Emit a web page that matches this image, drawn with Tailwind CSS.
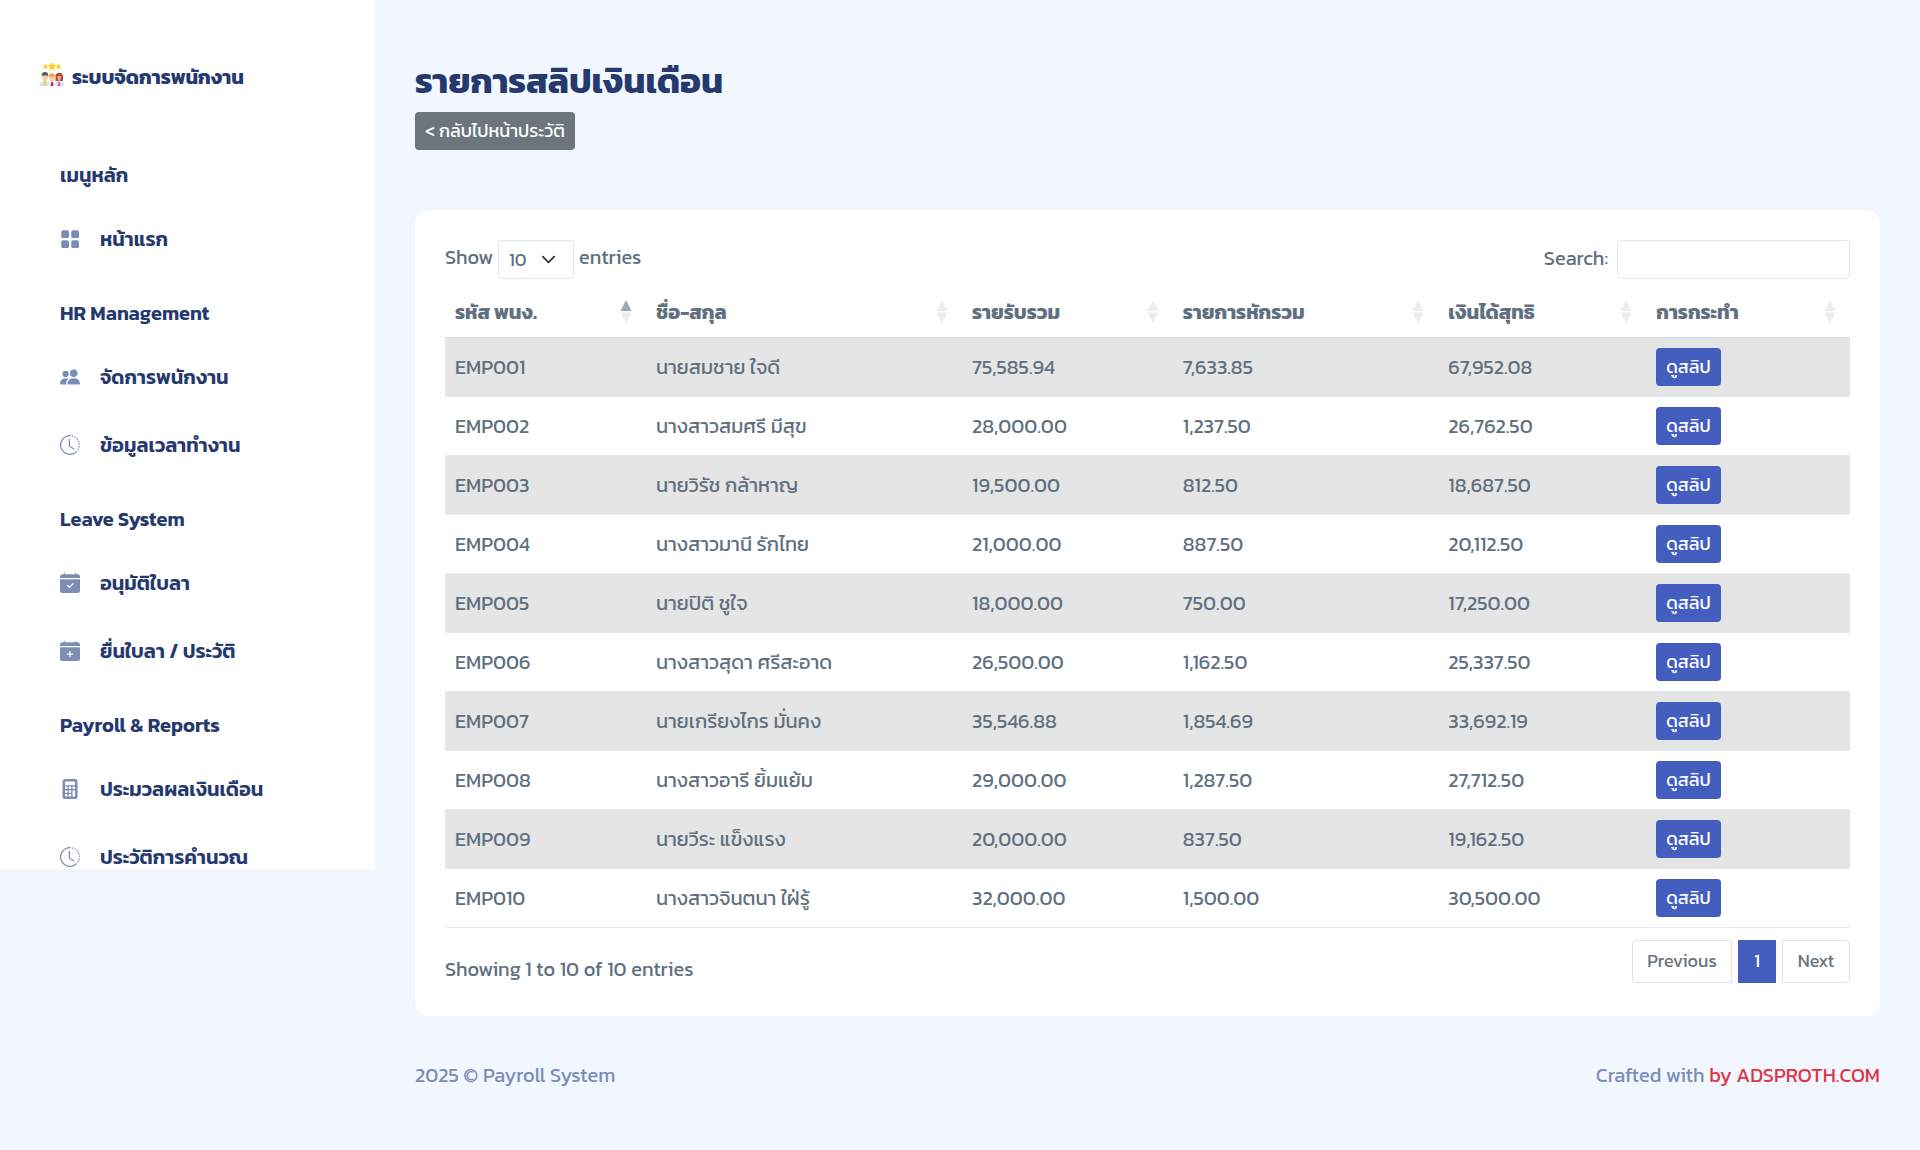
<!DOCTYPE html>
<html lang="th">
<head>
  <meta charset="UTF-8">
  <meta name="viewport" content="width=device-width, initial-scale=1.0">
  <title>รายการสลิปเงินเดือน</title>
  <script src="https://cdn.jsdelivr.net/npm/@tailwindcss/browser@4"></script>
</head>
<body class="bg-[#f2f7ff] text-[#607080] text-[20px] leading-[30px] font-['Kanit','Noto_Sans','Noto_Sans_Thai',sans-serif]">
  <!-- icon set -->
  <svg class="hidden" xmlns="http://www.w3.org/2000/svg">
    <symbol id="i-grid" viewBox="0 0 16 16"><rect x="1" y="1" width="6.2" height="6.2" rx="1.5"/><rect x="9" y="1" width="6.2" height="6.2" rx="1.5"/><rect x="1" y="9" width="6.2" height="6.2" rx="1.5"/><rect x="9" y="9" width="6.2" height="6.2" rx="1.5"/></symbol>
    <symbol id="i-people" viewBox="0 0 16 16"><path d="M7 14s-1 0-1-1 1-4 5-4 5 3 5 4-1 1-1 1zm4-6a3 3 0 1 0 0-6 3 3 0 0 0 0 6m-5.784 6A2.24 2.24 0 0 1 5 13c0-1.355.68-2.75 1.936-3.72A6.3 6.3 0 0 0 5 9c-4 0-5 3-5 4s1 1 1 1zM4.5 8a2.5 2.5 0 1 0 0-5 2.5 2.5 0 0 0 0 5"/></symbol>
    <symbol id="i-clock" viewBox="0 0 16 16"><path d="M8.515 1.019A7 7 0 0 0 8 1V0a8 8 0 0 1 .589.022zm2.004.45a7 7 0 0 0-.985-.299l.219-.976q.576.129 1.126.342zm1.37.71a7 7 0 0 0-.439-.27l.493-.87a8 8 0 0 1 .979.654l-.615.789a7 7 0 0 0-.418-.302zm1.834 1.79a7 7 0 0 0-.653-.796l.724-.69q.406.429.747.91zm.744 1.352a7 7 0 0 0-.214-.468l.893-.45a8 8 0 0 1 .45 1.088l-.95.313a7 7 0 0 0-.179-.483m.53 2.507a7 7 0 0 0-.1-1.025l.985-.17q.1.58.116 1.17zm-.131 1.538q.05-.254.081-.51l.993.123a8 8 0 0 1-.23 1.155l-.964-.267q.069-.247.12-.501m-.952 2.379q.276-.436.486-.908l.914.405q-.24.54-.555 1.038zm-.964 1.205q.183-.183.35-.378l.758.653a8 8 0 0 1-.401.432z"/><path d="M8 1a7 7 0 1 0 4.95 11.95l.707.707A8.001 8.001 0 1 1 8 0z"/><path d="M7.5 3a.5.5 0 0 1 .5.5v5.21l3.248 1.856a.5.5 0 0 1-.496.868l-3.5-2A.5.5 0 0 1 7 9V3.5a.5.5 0 0 1 .5-.5"/></symbol>
    <symbol id="i-cal-check" viewBox="0 0 16 16"><path d="M4 .5a.5.5 0 0 0-1 0V1H2a2 2 0 0 0-2 2v1h16V3a2 2 0 0 0-2-2h-1V.5a.5.5 0 0 0-1 0V1H4zM16 14V5H0v9a2 2 0 0 0 2 2h12a2 2 0 0 0 2-2m-5.146-5.146-3 3a.5.5 0 0 1-.708 0l-1.500-1.500a.5.5 0 0 1 .708-.708L7.5 10.793l2.646-2.647a.5.5 0 0 1 .708.708"/></symbol>
    <symbol id="i-cal-plus" viewBox="0 0 16 16"><path d="M4 .5a.5.5 0 0 0-1 0V1H2a2 2 0 0 0-2 2v1h16V3a2 2 0 0 0-2-2h-1V.5a.5.5 0 0 0-1 0V1H4zM16 14V5H0v9a2 2 0 0 0 2 2h12a2 2 0 0 0 2-2M8.5 8.5V10H10a.5.5 0 0 1 0 1H8.5v1.5a.5.5 0 0 1-1 0V11H6a.5.5 0 0 1 0-1h1.500V8.500a.5.5 0 0 1 1 0"/></symbol>
    <symbol id="i-calc" viewBox="0 0 16 16"><path d="M4 0h8a2 2 0 0 1 2 2v12a2 2 0 0 1-2 2H4a2 2 0 0 1-2-2V2a2 2 0 0 1 2-2"/><g fill="#fff"><rect x="4" y="2" width="8" height="3" rx=".5"/><rect x="4" y="6" width="2" height="2" rx=".5"/><rect x="7" y="6" width="2" height="2" rx=".5"/><rect x="10" y="6" width="2" height="2" rx=".5"/><rect x="4" y="9" width="2" height="2" rx=".5"/><rect x="7" y="9" width="2" height="2" rx=".5"/><rect x="4" y="12" width="2" height="2" rx=".5"/><rect x="7" y="12" width="2" height="2" rx=".5"/><rect x="10" y="9" width="2" height="5" rx=".5"/></g></symbol>
  </svg>

  <div class="flex items-start min-h-screen">
    <aside class="w-[375px] h-[869px] shrink-0 overflow-hidden bg-white text-[#25396f] font-semibold">
      <div class="h-[135px] pt-[62px] pl-10">
        <a href="#" class="flex items-start gap-2 font-bold">
          <svg class="size-6" viewBox="0 0 24 24">
            <g fill="#fdd017"><path d="M12 0l1.300 2.700 3 .4-2.200 2.100.6 3L12 6.800 9.300 8.200l.6-3-2.200-2.100 3-.4z"/><path d="M5.500 1.500l.9 1.900 2 .3-1.500 1.400.4 2-1.800-1-1.800 1 .4-2-1.500-1.400 2-.3z"/><path d="M18.500 1.500l.9 1.900 2 .3-1.500 1.400.4 2-1.800-1-1.800 1 .4-2-1.500-1.400 2-.3z"/></g>
            <path fill="#a5524a" d="M15.500 19v-5a3.800 3.800 0 0 1 7.500 0v5z"/>
            <path fill="#cfe3fb" d="M0 24v-2q0-2.500 5-3 4 .5 5 3v2zM14 24v-2q1-2.500 5-3 5 .5 5 3v2z"/>
            <path fill="#fbc9a8" d="M2.500 13h5v3.500q-.5 2.500-2.500 3-2-.5-2.500-3z"/>
            <path fill="#f3a58a" d="M17.500 14h3.400v2.500q-.3 2-1.700 2.500-1.400-.5-1.700-2.500z"/>
            <path fill="#58595f" d="M1.700 15v-3q.5-2 3.300-2t3.200 2v3l-.9-1.500H2.600z"/>
            <path fill="#f6d33c" d="M4.300 19h1.600l.4 5H3.800z"/>
            <path fill="#e4effd" d="M7.500 24v-1.500q1-2.500 4.500-3 3.500.5 4.500 3V24z"/>
            <path fill="#fcc9a2" d="M9.300 14h5.400v3q-.5 2.600-2.700 3.200-2.200-.6-2.700-3.200z"/>
            <path fill="#f0a63a" d="M8.800 16v-2.500q.8-2.300 3.200-2.300t3.200 2.300V16l-1-1.500H9.800z"/>
            <path fill="#e5194f" d="M11.200 20h1.600l.6 4h-2.800z"/><path fill="#e5405c" d="M18.500 20h1.300l.3 4h-1.900z"/>
          </svg>
          <span>ระบบจัดการพนักงาน</span>
        </a>
      </div>
      <nav class="pl-15">
        <h2 class="mt-[10px] h-15 flex items-center">เมนูหลัก</h2>
        <a href="#" class="h-17 flex items-center gap-5"><svg class="size-5 fill-[#7c8db5]"><use href="#i-grid"/></svg><span>หน้าแรก</span></a>

        <h2 class="mt-[10px] h-15 flex items-center">HR Management</h2>
        <a href="#" class="h-17 flex items-center gap-5"><svg class="size-5 fill-[#7c8db5]"><use href="#i-people"/></svg><span>จัดการพนักงาน</span></a>
        <a href="#" class="h-17 flex items-center gap-5"><svg class="size-5 fill-[#7c8db5]"><use href="#i-clock"/></svg><span>ข้อมูลเวลาทำงาน</span></a>

        <h2 class="mt-[10px] h-15 flex items-center">Leave System</h2>
        <a href="#" class="h-17 flex items-center gap-5"><svg class="size-5 fill-[#7c8db5]"><use href="#i-cal-check"/></svg><span>อนุมัติใบลา</span></a>
        <a href="#" class="h-17 flex items-center gap-5"><svg class="size-5 fill-[#7c8db5]"><use href="#i-cal-plus"/></svg><span>ยื่นใบลา / ประวัติ</span></a>

        <h2 class="mt-[10px] h-15 flex items-center">Payroll &amp; Reports</h2>
        <a href="#" class="h-17 flex items-center gap-5"><svg class="size-5 fill-[#7c8db5]"><use href="#i-calc"/></svg><span>ประมวลผลเงินเดือน</span></a>
        <a href="#" class="h-17 flex items-center gap-5"><svg class="size-5 fill-[#7c8db5]"><use href="#i-clock"/></svg><span>ประวัติการคำนวณ</span></a>
      </nav>
    </aside>

    <main class="flex-1 p-10">
      <header class="pt-5 pb-15">
        <h1 class="text-[35px] leading-[42px] mb-[10px] font-bold text-[#25396f]">รายการสลิปเงินเดือน</h1>
        <a href="#" class="inline-flex items-center h-[38px] px-[10px] rounded bg-[#6c757d] text-white text-[18px]">&lt; กลับไปหน้าประวัติ</a>
      </header>

      <section class="bg-white rounded-[14px] px-[30px] pt-[30px] pb-8">
        <div class="flex justify-between items-start mb-2">
          <div class="flex items-start gap-[5px]">
            <label for="length" class="pt-[2px]">Show</label>
            <div class="relative">
              <select id="length" class="appearance-none block w-[76px] h-[39px] pl-[10px] border border-[#dce7f1] rounded bg-white text-[18px]">
                <option>10</option>
                <option>25</option>
                <option>50</option>
                <option>100</option>
              </select>
              <svg class="absolute right-[18px] top-3 size-[15px] pointer-events-none" viewBox="0 0 16 16" fill="none" stroke="#343a40" stroke-width="2" stroke-linecap="round" stroke-linejoin="round"><path d="m2 5 6 6 6-6"/></svg>
            </div>
            <label for="length" class="pt-[2px]">entries</label>
          </div>
          <div class="flex items-start gap-[9px]">
            <label for="search" class="pt-[3px]">Search:</label>
            <input id="search" type="search" class="w-[233px] h-[39px] px-[10px] border border-[#dce7f1] rounded bg-white text-[18px]">
          </div>
        </div>

        <table class="w-full table-fixed text-left">
          <colgroup>
            <col class="w-[14.3%]">
            <col class="w-[22.5%]">
            <col class="w-[15%]">
            <col class="w-[18.9%]">
            <col class="w-[14.8%]">
            <col class="w-[14.5%]">
          </colgroup>
          <thead>
            <tr id="head" class="h-[50px] border-b border-[#dedede]"></tr>
          </thead>
          <tbody id="rows"></tbody>
        </table>

        <div class="flex justify-between items-start pt-3">
          <p class="pt-[14px]">Showing 1 to 10 of 10 entries</p>
          <div class="flex gap-[6px] text-[18px] text-[#6c757d]">
            <button class="h-[43px] w-[100px] border border-[#dee2e6] rounded-l">Previous</button>
            <button class="h-[43px] w-[38px] bg-[#435ebe] text-white">1</button>
            <button class="h-[43px] w-[68px] border border-[#dee2e6] rounded-r">Next</button>
          </div>
        </div>
      </section>

      <footer class="flex justify-between pt-11 text-[#7c8db5]">
        <p>2025 © Payroll System</p>
        <p>Crafted with <a href="#" class="text-[#dc3545]">by ADSPROTH.COM</a></p>
      </footer>
    </main>
  </div>

  <script>
    const columns = ['รหัส พนง.', 'ชื่อ-สกุล', 'รายรับรวม', 'รายการหักรวม', 'เงินได้สุทธิ', 'การกระทำ'];
    const slips = [
      ['EMP001', 'นายสมชาย ใจดี', '75,585.94', '7,633.85', '67,952.08'],
      ['EMP002', 'นางสาวสมศรี มีสุข', '28,000.00', '1,237.50', '26,762.50'],
      ['EMP003', 'นายวิรัช กล้าหาญ', '19,500.00', '812.50', '18,687.50'],
      ['EMP004', 'นางสาวมานี รักไทย', '21,000.00', '887.50', '20,112.50'],
      ['EMP005', 'นายปิติ ชูใจ', '18,000.00', '750.00', '17,250.00'],
      ['EMP006', 'นางสาวสุดา ศรีสะอาด', '26,500.00', '1,162.50', '25,337.50'],
      ['EMP007', 'นายเกรียงไกร มั่นคง', '35,546.88', '1,854.69', '33,692.19'],
      ['EMP008', 'นางสาวอารี ยิ้มแย้ม', '29,000.00', '1,287.50', '27,712.50'],
      ['EMP009', 'นายวีระ แข็งแรง', '20,000.00', '837.50', '19,162.50'],
      ['EMP010', 'นางสาวจินตนา ใฝ่รู้', '32,000.00', '1,500.00', '30,500.00']
    ];

    // First column is the sorted one, ascending
    document.getElementById('head').innerHTML = columns.map((name, i) => `
      <th class="pl-[10px] pr-[14px] font-bold">
        <div class="flex items-center justify-between">
          <span>${name}</span>
          <svg class="w-3 h-6" viewBox="0 0 12 24">
            <path d="M6 0 11.500 11H.5z" class="${i === 0 ? 'fill-[#9fa9b3]' : 'fill-[#ebecee]'}"/>
            <path d="M.5 12.500h11L6 23.500z" class="fill-[#ebecee]"/>
          </svg>
        </div>
      </th>`).join('');

    document.getElementById('rows').innerHTML = slips.map(row => `
      <tr class="h-[59px] border-b border-[#e9ebed] odd:bg-[#e5e5e5]">
        ${row.map(cell => `<td class="px-[10px]">${cell}</td>`).join('')}
        <td class="px-[10px]"><button class="block h-[38px] px-[10px] rounded bg-[#435ebe] text-white text-[18px]">ดูสลิป</button></td>
      </tr>`).join('');
  </script>
</body>
</html>
